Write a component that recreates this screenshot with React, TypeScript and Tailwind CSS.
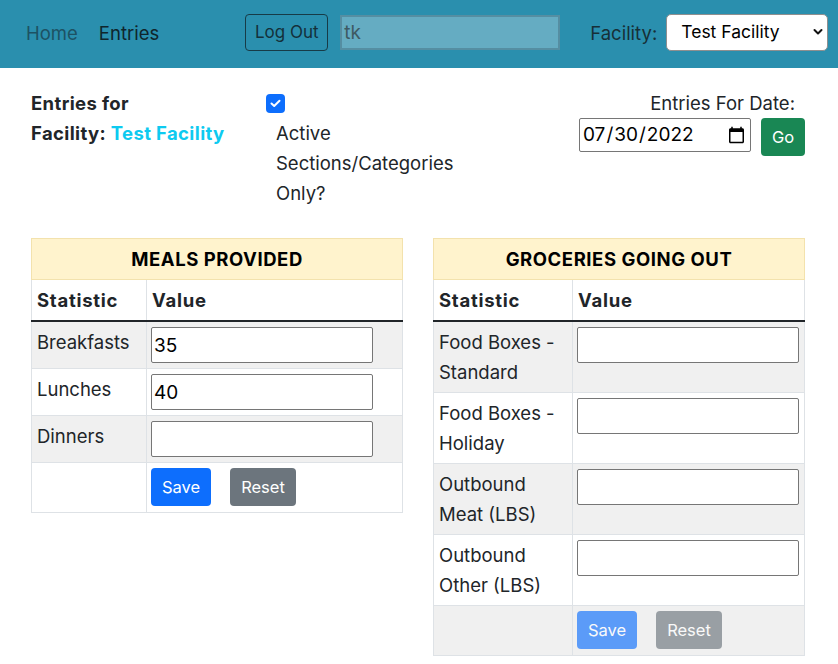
import { useState } from 'react'

type Row = { label: string; value: string }

const meals: Row[] = [
  { label: 'Breakfasts', value: '35' },
  { label: 'Lunches', value: '40' },
  { label: 'Dinners', value: '' },
]

const groceries: Row[] = [
  { label: 'Food Boxes - Standard', value: '' },
  { label: 'Food Boxes - Holiday', value: '' },
  { label: 'Outbound Meat (LBS)', value: '' },
  { label: 'Outbound Other (LBS)', value: '' },
]

function StatTable({ title, rows, firstCol, disabled }: { title: string; rows: Row[]; firstCol: string; disabled?: boolean }) {
  const [vals, setVals] = useState(rows.map((r) => r.value))
  const btnRowStriped = rows.length % 2 === 0

  return (
    <table className="w-[372px] table-fixed border-collapse border border-[#dee2e6] self-start">
      <colgroup>
        <col className={firstCol} />
        <col />
      </colgroup>
      <thead>
        <tr>
          <th colSpan={2} className="bg-[#fff3cd] border border-[#f3e2ad] py-[5px] text-center font-bold tracking-[0.03em] leading-[30px] text-black">
            {title}
          </th>
        </tr>
        <tr>
          <th className="border-x border-[#dee2e6] border-b-2 border-b-[#212529] px-[5px] py-[5px] text-left font-bold tracking-[0.04em] leading-[30px]">
            Statistic
          </th>
          <th className="border-x border-[#dee2e6] border-b-2 border-b-[#212529] px-[5px] py-[5px] text-left font-bold tracking-[0.04em] leading-[30px]">
            Value
          </th>
        </tr>
      </thead>
      <tbody>
        {rows.map((r, i) => (
          <tr key={r.label} className={i % 2 === 0 ? 'bg-[#f0f0f0]' : 'bg-white'}>
            <td className="border border-[#dee2e6] px-[5px] py-[5px] align-top leading-[30px]">{r.label}</td>
            <td className="border border-[#dee2e6] px-[4px] py-[5px] align-top">
              <input
                value={vals[i]}
                onChange={(e) => setVals(vals.map((v, j) => (j === i ? e.target.value : v)))}
                className="block w-[222px] h-[36px] bg-white border border-[#767676] rounded-[2px] px-[2px] text-[19px] text-black outline-none"
              />
            </td>
          </tr>
        ))}
        <tr className={btnRowStriped ? 'bg-[#f0f0f0]' : 'bg-white'}>
          <td className="border border-[#dee2e6]"></td>
          <td className="border border-[#dee2e6] px-[4px] pt-[5px] pb-[6px]">
            <div className={`flex gap-[19px] ${disabled ? 'opacity-[0.65]' : ''}`}>
              <button className="h-[38px] w-[60px] rounded-[4px] bg-[#0d6efd] text-[16.5px] text-white">Save</button>
              <button className="h-[38px] w-[66px] rounded-[4px] bg-[#6c757d] text-[16.5px] text-white">Reset</button>
            </div>
          </td>
        </tr>
      </tbody>
    </table>
  )
}

export default function App() {
  return (
    <div className="min-h-screen bg-white font-['Inter',sans-serif] text-[18.5px] text-[#212529]">
      <nav className="flex h-[68px] items-center bg-[#2a8fae]">
        <a className="ml-[26px] text-[#1d5263]">Home</a>
        <a className="ml-[21px] text-[#0f252c]">Entries</a>
        <button className="ml-[86px] mb-[3px] h-[37px] w-[83px] rounded-[4px] border border-[#173b47] text-[17px] text-[#14303a]">
          Log Out
        </button>
        <input
          defaultValue="tk"
          className="ml-[12px] mb-[3px] h-[35px] w-[220px] border-2 border-[#558ea2] bg-[#65acc2] px-[2px] text-[19px] text-[#3e5a63] outline-none"
        />
        <span className="ml-[30px] text-[#172f37]">Facility:</span>
        <div className="relative ml-[9px] mb-[3px]">
          <select className="h-[37px] w-[162px] appearance-none rounded-[5px] border border-[#8f8f8f] bg-white pl-[14px] text-[17.5px] text-black outline-none">
            <option>Test Facility</option>
          </select>
          <svg className="pointer-events-none absolute right-[5px] top-[14px]" width="10" height="8" viewBox="0 0 10 8">
            <path d="M1.5 2 L5 5.5 L8.5 2" fill="none" stroke="#111" strokeWidth="2" strokeLinecap="round" strokeLinejoin="round" />
          </svg>
        </div>
      </nav>

      <div className="pl-[31px] pr-[33px] pt-[20px]">
        <div className="flex">
          <div className="w-[235px] font-bold tracking-[0.02em] leading-[30px]">
            <div>Entries for</div>
            <div>
              Facility: <span className="text-[#0dcaf0]">Test Facility</span>
            </div>
          </div>
          <div className="w-[200px]">
            <div className="flex h-[30px] items-center">
              <span className="flex h-[19px] w-[19px] items-center justify-center rounded-[4px] bg-[#0d6efd]">
                <svg width="11" height="9" viewBox="0 0 11 9">
                  <path d="M1.5 4.5 L4.2 7 L9.5 1.8" fill="none" stroke="#fff" strokeWidth="2" strokeLinecap="round" strokeLinejoin="round" />
                </svg>
              </span>
            </div>
            <label className="block w-[185px] pl-[10px] leading-[30px]">Active Sections/Categories Only?</label>
          </div>
          <div className="flex flex-1 flex-col items-end">
            <div className="pr-[10px] leading-[30px]">Entries For Date:</div>
            <div className="flex items-start gap-[10px]">
              <input
                type="date"
                defaultValue="2022-07-30"
                className="h-[34px] w-[172px] rounded-[2px] border border-[#767676] px-[2px] text-[19px] text-black outline-none"
              />
              <button className="h-[38px] w-[44px] rounded-[4px] bg-[#198754] text-[16.5px] text-white">Go</button>
            </div>
          </div>
        </div>

        <div className="mt-[30px] flex items-start gap-[30px]">
          <StatTable title="MEALS PROVIDED" rows={meals} firstCol="w-[115px]" />
          <StatTable title="GROCERIES GOING OUT" rows={groceries} firstCol="w-[139px]" disabled />
        </div>
      </div>
    </div>
  )
}
